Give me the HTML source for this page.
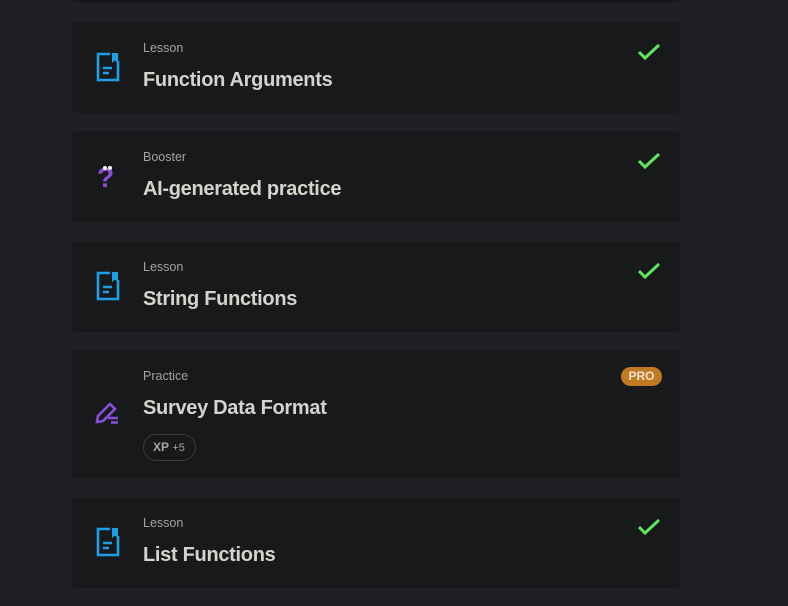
<!DOCTYPE html>
<html><head><style>
body{margin:0;width:788px;height:606px;background:#1f2023;position:relative;overflow:hidden;font-family:"Liberation Sans",sans-serif}
.c{position:absolute;left:72px;width:608px;background:#18191b;border-radius:4px}
.l{position:absolute;left:71px;top:19px;font-size:12.5px;color:#a3a3a3}
.t{position:absolute;left:71px;top:47px;font-size:20px;font-weight:bold;color:#d6d2cc;letter-spacing:-0.3px}
.i{position:absolute;left:24px;top:30px}
.k{position:absolute;left:565px;top:21px}
</style></head><body>
<div class="c" style="top:-10px;height:13px"></div>
<div class="c" style="top:22px;height:91px">
<svg class="i" width="24" height="30" viewBox="0 0 24 30"><path d="M14 2H2v26h20V9" fill="none" stroke="#1ea0e8" stroke-width="2.6"/><path d="M16 1h6v10l-3-2.5-3 2.5z" fill="#1ea0e8"/><path d="M7 16h9M7 21h6" stroke="#1ea0e8" stroke-width="2.6"/></svg>
<div class="l">Lesson</div><div class="t">Function Arguments</div>
<svg class="k" width="24" height="18" viewBox="0 0 24 18"><path d="M2 9l6 6L22 2" fill="none" stroke="#5ee65a" stroke-width="3"/></svg></div>
<div class="c" style="top:131px;height:91px">
<div style="position:absolute;left:25px;top:33px;font-size:28px;font-weight:bold;color:#8a4fd8;line-height:28px">?</div>
<div style="position:absolute;left:31px;top:35px;width:4px;height:4px;background:#fff;border-radius:2px"></div>
<div style="position:absolute;left:36px;top:35px;width:4px;height:4px;background:#fff;border-radius:2px"></div>
<div class="l">Booster</div><div class="t">AI-generated practice</div>
<svg class="k" width="24" height="18" viewBox="0 0 24 18"><path d="M2 9l6 6L22 2" fill="none" stroke="#5ee65a" stroke-width="3"/></svg></div>
<div class="c" style="top:241px;height:91px">
<svg class="i" width="24" height="30" viewBox="0 0 24 30"><path d="M14 2H2v26h20V9" fill="none" stroke="#1ea0e8" stroke-width="2.6"/><path d="M16 1h6v10l-3-2.5-3 2.5z" fill="#1ea0e8"/><path d="M7 16h9M7 21h6" stroke="#1ea0e8" stroke-width="2.6"/></svg>
<div class="l">Lesson</div><div class="t">String Functions</div>
<svg class="k" width="24" height="18" viewBox="0 0 24 18"><path d="M2 9l6 6L22 2" fill="none" stroke="#5ee65a" stroke-width="3"/></svg></div>
<div class="c" style="top:350px;height:128px">
<svg style="position:absolute;left:22px;top:49px" width="26" height="26" viewBox="0 0 26 26"><path d="M3 23l1-6L16 5l5 5L9 22z" fill="none" stroke="#8a4fd8" stroke-width="2.6"/><path d="M14 19h10M17 23.5h7" stroke="#8a4fd8" stroke-width="2.4"/></svg>
<div class="l">Practice</div><div class="t">Survey Data Format</div>
<div style="position:absolute;left:71px;top:84px;width:53px;height:27px;border:1px solid #3a3b3e;border-radius:14px;box-sizing:border-box;font-size:12px;color:#a8a8a8;line-height:25px;text-indent:9px"><b>XP</b> <span style="font-size:11px">+5</span></div>
<div style="position:absolute;left:549px;top:17px;width:41px;height:19px;background:#c27a22;border-radius:10px;color:#f0e4d4;font-size:12px;font-weight:bold;text-align:center;line-height:19px">PRO</div></div>
<div class="c" style="top:497px;height:91px">
<svg class="i" width="24" height="30" viewBox="0 0 24 30"><path d="M14 2H2v26h20V9" fill="none" stroke="#1ea0e8" stroke-width="2.6"/><path d="M16 1h6v10l-3-2.5-3 2.5z" fill="#1ea0e8"/><path d="M7 16h9M7 21h6" stroke="#1ea0e8" stroke-width="2.6"/></svg>
<div class="l">Lesson</div><div class="t">List Functions</div>
<svg class="k" width="24" height="18" viewBox="0 0 24 18"><path d="M2 9l6 6L22 2" fill="none" stroke="#5ee65a" stroke-width="3"/></svg></div>
</body></html>
